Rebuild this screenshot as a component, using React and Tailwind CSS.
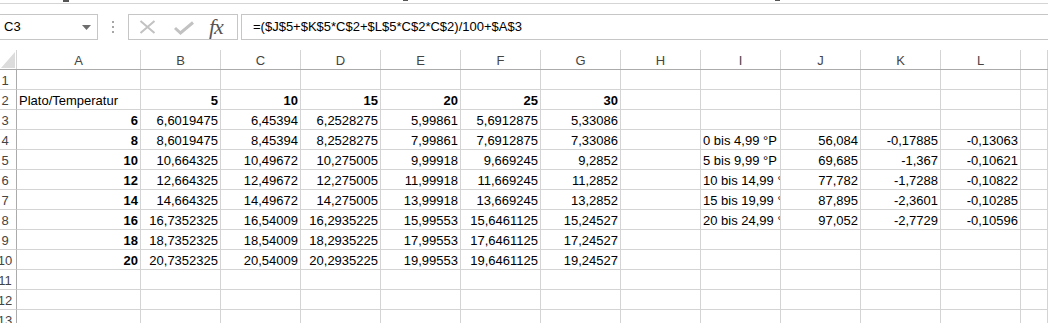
import React from 'react';

const cols = ['A', 'B', 'C', 'D', 'E', 'F', 'G', 'H', 'I', 'J', 'K', 'L', ''];

const main = {
  B: ['6,6019475', '8,6019475', '10,664325', '12,664325', '14,664325', '16,7352325', '18,7352325', '20,7352325'],
  C: ['6,45394', '8,45394', '10,49672', '12,49672', '14,49672', '16,54009', '18,54009', '20,54009'],
  D: ['6,2528275', '8,2528275', '10,275005', '12,275005', '14,275005', '16,2935225', '18,2935225', '20,2935225'],
  E: ['5,99861', '7,99861', '9,99918', '11,99918', '13,99918', '15,99553', '17,99553', '19,99553'],
  F: ['5,6912875', '7,6912875', '9,669245', '11,669245', '13,669245', '15,6461125', '17,6461125', '19,6461125'],
  G: ['5,33086', '7,33086', '9,2852', '11,2852', '13,2852', '15,24527', '17,24527', '19,24527'],
};

const plato = ['6', '8', '10', '12', '14', '16', '18', '20'];

const ranges = [
  ['0 bis 4,99 °P', '56,084', '-0,17885', '-0,13063'],
  ['5 bis 9,99 °P', '69,685', '-1,367', '-0,10621'],
  ['10 bis 14,99 °P', '77,782', '-1,7288', '-0,10822'],
  ['15 bis 19,99 °P', '87,895', '-2,3601', '-0,10285'],
  ['20 bis 24,99 °P', '97,052', '-2,7729', '-0,10596'],
];

// returns { text, bold, left } for a given row number and column letter
function cellAt(row, col) {
  if (row === 2) {
    if (col === 'A') return { text: 'Plato/Temperatur', left: true };
    const head = { B: '5', C: '10', D: '15', E: '20', F: '25', G: '30' };
    if (head[col]) return { text: head[col], bold: true };
  }
  if (row >= 3 && row <= 10) {
    const i = row - 3;
    if (col === 'A') return { text: plato[i], bold: true };
    if (main[col]) return { text: main[col][i] };
  }
  if (row >= 4 && row <= 8) {
    const r = ranges[row - 4];
    if (col === 'I') return { text: r[0], left: true };
    if (col === 'J') return { text: r[1] };
    if (col === 'K') return { text: r[2] };
    if (col === 'L') return { text: r[3] };
  }
  return null;
}

const FormulaBar = () => (
  <div className="flex h-[26px] text-[13px] text-black">
    <div className="w-[98px] flex items-center justify-between pl-[4px] pr-[6px] border-y border-r border-[#c6c6c6] leading-[24px]">
      <span>C3</span>
      <svg width="9" height="5" viewBox="0 0 9 5">
        <polygon points="0,0 9,0 4.5,5" fill="#6d6d6d" />
      </svg>
    </div>
    <div className="w-[30px] flex flex-col items-center justify-center gap-[3px]">
      <div className="w-[2px] h-[2px] bg-[#a6a6a6]"></div>
      <div className="w-[2px] h-[2px] bg-[#a6a6a6]"></div>
      <div className="w-[2px] h-[2px] bg-[#a6a6a6]"></div>
    </div>
    <div className="w-[110px] flex items-center border border-[#c6c6c6] pl-[10px]">
      <svg width="17" height="14" viewBox="0 0 17 14">
        <path d="M1.5 1 L15.5 13 M15.5 1 L1.5 13" stroke="#c2c2c2" strokeWidth="2" fill="none" />
      </svg>
      <svg className="ml-[18px] mt-[2px]" width="20" height="14" viewBox="0 0 20 14">
        <path d="M1 7 L6.5 12 L19 1.5" stroke="#c2c2c2" strokeWidth="3" fill="none" />
      </svg>
      <span className="ml-[15px] font-['Liberation_Serif',serif] italic text-[22px] text-[#555] leading-[24px] tracking-[-1px]">fx</span>
    </div>
    <div className="w-[3px]"></div>
    <div className="flex-1 border-y border-l border-[#c6c6c6] pl-[11px] leading-[24px]">
      =($J$5+$K$5*C$2+$L$5*C$2*C$2)/100+$A$3
    </div>
  </div>
);

const GRID = 'grid grid-cols-[17px_124px_repeat(11,80px)_27px]';

const Sheet = () => {
  const rows = Array.from({ length: 13 }, (_, i) => i + 1);
  return (
    <div className="text-[13px]">
      <div className={GRID + ' h-[20px] border-b border-[#ababab] text-[#444]'}>
        <div className="border-r border-[#d4d4d4] flex items-end justify-end pr-[1px] pb-[1px]">
          <svg width="14" height="16" viewBox="0 0 14 16">
            <polygon points="14,0 14,16 0,16" fill="#dcdcdc" />
          </svg>
        </div>
        {cols.map((c, i) => (
          <div key={i} className="border-r border-[#d4d4d4] text-center leading-[21px] overflow-hidden">
            {c}
          </div>
        ))}
      </div>
      {rows.map((r) => (
        <div key={r} className={GRID + ' h-[20px]'}>
          <div className="border-r border-b border-r-[#ababab] border-b-[#d4d4d4] overflow-hidden text-[#444]">
            <div className="w-[10px] flex justify-center leading-[22px] whitespace-nowrap">{r}</div>
          </div>
          {cols.map((c, i) => {
            const cell = c ? cellAt(r, c) : null;
            return (
              <div
                key={i}
                className={
                  'border-r border-b border-[#d4d4d4] px-[2px] leading-[21px] overflow-hidden whitespace-nowrap text-black ' +
                  (cell && cell.left ? 'text-left' : 'text-right') +
                  (cell && cell.bold ? ' font-bold' : '')
                }
              >
                {cell ? cell.text : ''}
              </div>
            );
          })}
        </div>
      ))}
    </div>
  );
};

export default function App() {
  return (
    <div className="w-[1048px] h-[323px] overflow-hidden bg-white font-['Liberation_Sans',Arial,sans-serif]">
      <div className="h-[3px] flex items-start">
        <div className="ml-[63px] w-[6px] h-[2px] bg-[#555]"></div>
        <div className="ml-[334px] w-[5px] h-[1px] bg-[#555]"></div>
        <div className="ml-[367px] w-[5px] h-[1px] bg-[#555]"></div>
      </div>
      <div className="h-[11px] border-t border-[#d5d5d5]"></div>
      <FormulaBar />
      <div className="h-[10px]"></div>
      <Sheet />
    </div>
  );
}
